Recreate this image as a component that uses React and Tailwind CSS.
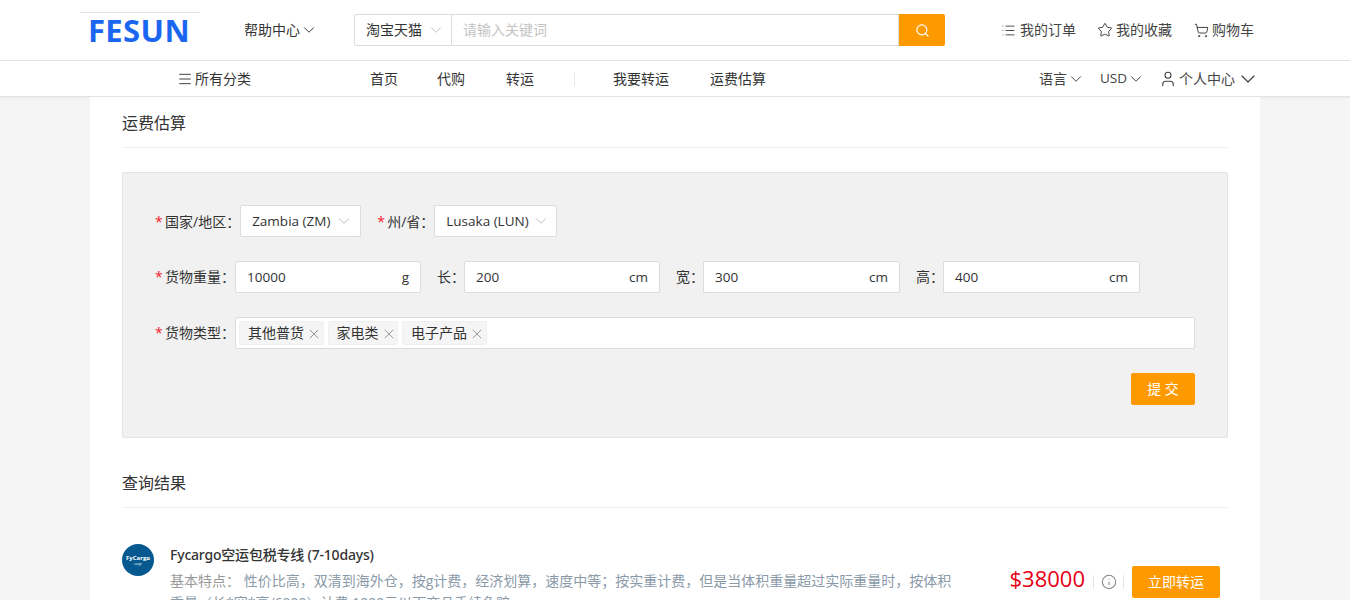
import React from "react";
import { ChevronDown, Search, Menu, List, Star, ShoppingCart, User, X, Info } from "lucide-react";

const font = "font-['Open_Sans','Noto_Sans_CJK_SC',sans-serif]";

function Req({ label, className = "" }) {
  return (
    <span className={`flex items-center text-[14px] text-[#333] whitespace-nowrap ${className}`}>
      <span className="text-[#f5222d] w-[10px]">*</span>
      {label}：
    </span>
  );
}

function SelectBox({ text, className = "" }) {
  return (
    <div className={`h-[32px] bg-white border border-[#dcdcdc] rounded-[2px] flex items-center justify-between pl-[11px] text-[13.5px] text-[#333] ${className}`}>
      <span className="pt-[1px]">{text}</span>
      <ChevronDown size={18} strokeWidth={1} className="text-[#aaa]" />
    </div>
  );
}

function UnitInput({ value, unit, className = "" }) {
  return (
    <div className={`h-[32px] bg-white border border-[#dcdcdc] rounded-[2px] flex items-center justify-between px-[11px] text-[13.5px] text-[#333] ${className}`}>
      <span className="pt-[1px]">{value}</span>
      <span className="pt-[1px]">{unit}</span>
    </div>
  );
}

function Tag({ text }) {
  return (
    <span className="h-[24px] bg-[#f5f5f5] border border-[#f0f0f0] rounded-[2px] flex items-center pl-[8px] text-[14px] text-[#333]">
      <span className="pb-[2px]">{text}</span>
      <X size={16} strokeWidth={1.3} className="ml-[2px] mr-[0.5px] mt-[2px] text-[#888]" />
    </span>
  );
}

function Dim({ label }) {
  return <span className="ml-[16px] w-[27px] text-[14px] text-[#333] whitespace-nowrap pb-[2px]">{label}：</span>;
}

export default function App() {
  return (
    <div className={`h-screen overflow-hidden bg-[#f5f5f5] ${font}`}>
      <header className="h-[61px] bg-white border-b border-[#e2e2e2] flex items-center">
        <div className="w-[120px] ml-[80px] h-[34px] border-t border-[#e4e4e4] mt-[-3px] pr-[2px] flex justify-center items-start">
          <span className="text-[#1a66f0] text-[31px] tracking-[0.4px] leading-[34px] font-bold font-['Noto_Sans',sans-serif]">FESUN</span>
        </div>
        <div className="ml-[44px] w-[110px] flex items-center text-[14px] text-[#333]">
          <span className="pb-[2px]">帮助中心</span>
          <ChevronDown size={18} strokeWidth={1.3} />
        </div>
        <div className="flex h-[32px] w-[591px]">
          <div className="w-[98px] border border-[#dcdcdc] rounded-l-[2px] flex items-center justify-between pl-[11px] pr-[6px] text-[14px] text-[#333]">
            <span className="pb-[2px]">淘宝天猫</span>
            <ChevronDown size={18} strokeWidth={1} className="text-[#aaa]" />
          </div>
          <div className="flex-1 border-y border-r border-[#dcdcdc] flex items-center pl-[11px] pb-[2px] text-[14px] text-[#c4c4c4]">
            请输入关键词
          </div>
          <div className="w-[46px] bg-[#ff9900] rounded-r-[2px] flex items-center justify-center text-white">
            <Search size={15} strokeWidth={1.9} />
          </div>
        </div>
        <div className="ml-auto mr-[96px] flex items-center text-[14px] text-[#444]">
          <span className="flex items-center gap-[4px]"><List size={15} strokeWidth={1.5} /><span className="pb-[2px]">我的订单</span></span>
          <span className="flex items-center gap-[3px] ml-[21px]"><Star size={16} strokeWidth={1.5} /><span className="pb-[2px]">我的收藏</span></span>
          <span className="flex items-center gap-[3px] ml-[22px]"><ShoppingCart size={15} strokeWidth={1.6} /><span className="pb-[2px]">购物车</span></span>
        </div>
      </header>

      <nav className="h-[36px] bg-white border-b border-[#e2e2e2] shadow-[0_1px_2px_rgba(0,0,0,0.05)] flex items-center text-[14px] text-[#333]">
        <span className="ml-[177px] w-[193px] flex items-center gap-[2px]"><Menu size={16} strokeWidth={1.4} />所有分类</span>
        <span>首页</span>
        <span className="ml-[39px]">代购</span>
        <span className="ml-[41px]">转运</span>
        <span className="ml-[40px] mr-[38px] w-px h-[14px] bg-[#e6e6e6]"></span>
        <span>我要转运</span>
        <span className="ml-[41px]">运费估算</span>
        <div className="ml-auto mr-[90px] flex items-center text-[#444]">
          <span className="flex items-center">语言<ChevronDown size={18} strokeWidth={1.3} /></span>
          <span className="flex items-center ml-[15px] text-[13.5px]">USD<ChevronDown size={18} strokeWidth={1.3} /></span>
          <span className="flex items-center ml-[14px]"><User size={18} strokeWidth={1.5} className="mr-[2px]" />个人中心<ChevronDown size={24} strokeWidth={1.3} className="ml-[1px]" /></span>
        </div>
      </nav>

      <main className="mx-[90px] bg-white px-[32px] h-[600px]">
        <div className="h-[51px] border-b border-[#f0f0f0] flex items-center text-[16px] text-[#333] pt-[1px]">运费估算</div>

        <section className="mt-[24px] h-[266px] bg-[#f1f1f1] border border-[#e4e4e4] rounded-[2px] pl-[32px] pr-[32px] pt-[32px]">
          <div className="flex items-center">
            <Req label="国家/地区" />
            <SelectBox text="Zambia (ZM)" className="w-[121px] pr-[7px]" />
            <Req label="州/省" className="ml-[16px]" />
            <SelectBox text="Lusaka (LUN)" className="w-[123px] pr-[6px]" />
          </div>
          <div className="flex items-center mt-[24px]">
            <Req label="货物重量" className="pb-[2px]" />
            <UnitInput value="10000" unit="g" className="w-[186px]" />
            <Dim label="长" />
            <UnitInput value="200" unit="cm" className="w-[196px]" />
            <Dim label="宽" />
            <UnitInput value="300" unit="cm" className="w-[197px]" />
            <Dim label="高" />
            <UnitInput value="400" unit="cm" className="w-[197px]" />
          </div>
          <div className="flex items-center mt-[24px]">
            <Req label="货物类型" className="pb-[2px]" />
            <div className="flex-1 h-[32px] bg-white border border-[#dcdcdc] rounded-[2px] flex items-center gap-[4px] pl-[3px]">
              <Tag text="其他普货" />
              <Tag text="家电类" />
              <Tag text="电子产品" />
            </div>
          </div>
          <div className="flex justify-end mt-[24px]">
            <button className="w-[64px] h-[32px] bg-[#ff9900] rounded-[2px] text-white text-[14px] pb-[2px]">提 交</button>
          </div>
        </section>

        <div className="mt-[20px] h-[50px] border-b border-[#f0f0f0] flex items-center text-[16px] text-[#333]">查询结果</div>

        <div className="mt-[36px] flex">
          <div className="w-[32px] h-[32px] rounded-full bg-[#05598f] flex flex-col items-center justify-center text-white shrink-0">
            <span className="text-[6px] leading-[7px] font-bold">FyCargo</span>
            <span className="text-[3px] leading-[4px]">cargo</span>
          </div>
          <div className="ml-[16px] w-[790px] shrink-0">
            <div className="text-[14px] leading-[22px] font-medium tracking-[-0.2px] text-[#333] font-['Noto_Sans','Noto_Sans_CJK_SC',sans-serif]">Fycargo空运包税专线 (7-10days)</div>
            <div className="text-[14px] leading-[22px] text-[#999] mt-[4px]">
              基本特点： <span className="text-[#8a9aa8]">性价比高，双清到海外仓，按g计费，经济划算，速度中等；按实重计费，但是当体积重量超过实际重量时，按体积重量（长*宽*高/6000）计费 1000元以下商品手续免赔</span>
            </div>
          </div>
          <div className="ml-auto flex items-center h-[32px] mt-[22px]">
            <span className="text-[#e60012] text-[22px] pb-[8px]">$38000</span>
            <span className="w-px h-[14px] bg-[#e6e6e6] ml-[8px]"></span>
            <Info size={16} strokeWidth={1.6} className="text-[#888] ml-[7px]" />
            <span className="w-px h-[14px] bg-[#e6e6e6] ml-[6px]"></span>
            <button className="ml-[8px] mr-[8px] w-[88px] h-[32px] bg-[#ff9900] rounded-[2px] text-white text-[14px] pb-[2px]">立即转运</button>
          </div>
        </div>
      </main>
    </div>
  );
}
